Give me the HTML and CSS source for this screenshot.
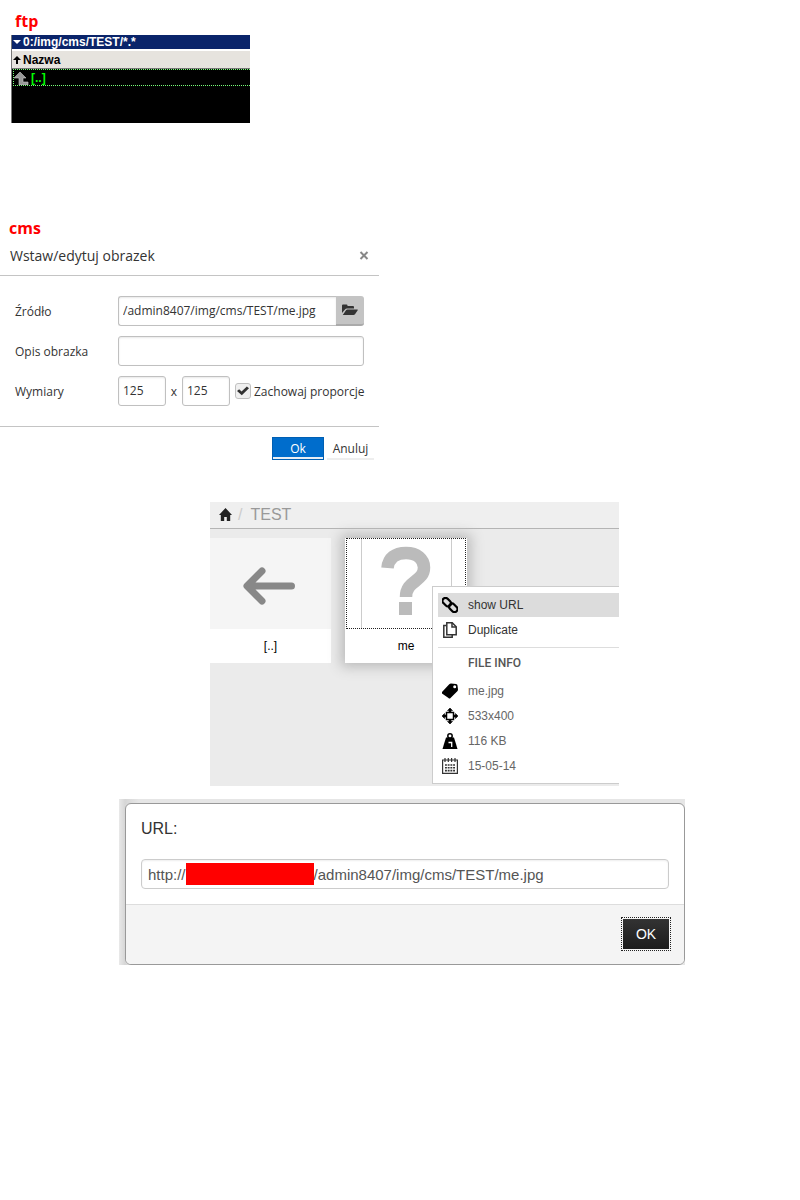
FILE: index.html
```
<!DOCTYPE html>
<html lang="pl">
<head>
<meta charset="utf-8">
<meta name="viewport" content="width=device-width, initial-scale=1">
<title>ftp / cms</title>
<link rel="stylesheet" href="styles.css">
</head>
<body>
<main class="page">
  <section class="ftp">
    <h2 class="label">ftp</h2>
    <div class="ftp-panel">
      <div class="ftp-path"><svg width="8" height="8" viewBox="0 0 8 8"><path d="M0 2h8L4 6z" fill="#fff"/></svg>0:/img/cms/TEST/*.*</div>
      <div class="ftp-head"><svg width="8" height="10" viewBox="0 0 8 10"><path d="M4 1l4 4H5v4H3V5H0z"/></svg>Nazwa</div>
      <div class="ftp-row"><svg width="15" height="14" viewBox="0 0 15 14"><path d="M6 1l6 6H9v4h5v3H5V7H0z" fill="#999" stroke="#ccc" stroke-width=".6"/></svg>[..]</div>
    </div>
  </section>

  <section class="cms">
    <h2 class="label label-cms">cms</h2>
    <form class="insert">
      <header class="insert-head">
        <h3 class="insert-title">Wstaw/edytuj obrazek</h3>
        <button class="close" type="button" aria-label="Zamknij"><svg width="10" height="9" viewBox="0 0 10 9"><path d="M1.500 1l7 7M8.500 1l-7 7" stroke="#888" stroke-width="2"/></svg></button>
      </header>
      <div class="insert-body">
        <div class="row">
          <label class="row-label" for="src">Źródło</label>
          <div class="source">
            <input class="field source-field" id="src" type="text" value="/admin8407/img/cms/TEST/me.jpg">
            <button class="browse" type="button" aria-label="Przeglądaj"><svg width="16" height="12" viewBox="0 0 16 12"><path d="M0 9V1.500Q0 .5 1 .5h3.500q1 0 1 1V2H11q1 0 1 1v1.500H5Q3.700 4.500 3 5.600zM.8 11L4 6.200q.5-.7 1.400-.7h9.800q1 0 .5.8L13 10.200q-.6.8-1.500.8z" fill="#333"/></svg></button>
          </div>
        </div>
        <div class="row">
          <label class="row-label" for="desc">Opis obrazka</label>
          <input class="field" id="desc" type="text">
        </div>
        <div class="row">
          <label class="row-label" for="w">Wymiary</label>
          <div class="dims">
            <input class="field size" id="w" type="text" value="125">
            <span class="times">x</span>
            <input class="field size" type="text" value="125" aria-label="Wysokość">
            <label class="keep"><input class="tick" type="checkbox" checked>Zachowaj proporcje</label>
          </div>
        </div>
      </div>
      <footer class="insert-foot">
        <button class="ok" type="button">Ok</button>
        <button class="cancel" type="button">Anuluj</button>
      </footer>
    </form>
  </section>

  <section class="files">
    <nav class="crumbs">
      <a class="home" href="#" aria-label="Home"><svg width="13" height="13" viewBox="0 0 13 13"><path d="M6.500 0L13 7h-1.800v6H7.800V9H5.200v4H1.800V7H0L6.500 0z" fill="#222"/></svg></a>
      <span class="slash">/</span>
      <span>TEST</span>
    </nav>
    <div class="cards">
      <figure class="card">
        <div class="thumb thumb-back"><svg width="52" height="38" viewBox="0 0 52 38"><path d="M48.500 19H5M19 4L4 19l15 15" fill="none" stroke="#888" stroke-width="7" stroke-linecap="round" stroke-linejoin="round"/></svg></div>
        <figcaption class="caption">[..]</figcaption>
      </figure>
      <figure class="card card-active">
        <div class="thumb thumb-file"><div class="unknown"><svg width="50" height="70" viewBox="0 0 50 70"><path d="M6.500 22C7.500 12 14 7 25 7c11 0 18 6 18 14.500C43 36 25 34 25 51" fill="none" stroke="#bbb" stroke-width="12.500"/><path d="M18 56h13v13H18z" fill="#bbb"/></svg></div></div>
        <figcaption class="caption">me</figcaption>
      </figure>
    </div>
    <div class="menu">
      <button class="item item-on" type="button"><svg width="16" height="16" viewBox="0 0 16 16"><g fill="none" stroke="#000" stroke-width="2.200"><rect x="0" y="2.200" width="9.500" height="6" rx="3" transform="rotate(45 4.750 5.200)"/><rect x="6.500" y="7.800" width="9.500" height="6" rx="3" transform="rotate(45 11.250 10.800)"/></g></svg>show URL</button>
      <button class="item" type="button"><svg width="16" height="16" viewBox="0 0 16 16"><g fill="#fff" stroke="#333" stroke-width="1.500"><path d="M4 3.500H1.800v11.700h8.400V13"/><path d="M4.800.8h5.400l4 4v8H4.800z"/><path d="M10 .8v4.200h4.200" fill="none"/></g></svg>Duplicate</button>
      <div class="info-title">FILE INFO</div>
      <div class="info"><svg width="16" height="16" viewBox="0 0 16 16"><path fill-rule="evenodd" d="M0 9L7 1.500Q8 .5 9 .5l5 .5q1.500.2 1.500 1.500l.5 4q0 1-.7 1.700L8.500 15q-1 1-2 0L0 10.500q-.6-.8 0-1.500zM12.700 2.200a1.500 1.500 0 100 3 1.500 1.500 0 000-3z"/></svg>me.jpg</div>
      <div class="info"><svg width="16" height="16" viewBox="0 0 16 16"><rect x="4.500" y="4.500" width="7" height="7" fill="none" stroke="#000" stroke-width="1.500"/><path d="M8 0l2.500 2.500H9V4H7V2.500H5.500zM8 16l2.500-2.500H9V12H7v1.500H5.500zM0 8l2.500-2.500V7H4v2H2.500v1.500zM16 8l-2.500-2.500V7H12v2h1.500v1.500z" stroke="#000" stroke-width=".6"/></svg>533x400</div>
      <div class="info"><svg width="16" height="16" viewBox="0 0 16 16"><circle cx="8" cy="3" r="2.200" fill="none" stroke="#000" stroke-width="1.500"/><path d="M4 4.500h8L15.500 16H.5z"/><path d="M6.500 9.500h3.200V14" fill="none" stroke="#fff" stroke-width="1.300"/></svg>116 KB</div>
      <div class="info"><svg width="16" height="16" viewBox="0 0 16 16"><path d="M.6 2h14.800v13.400H.6zM3 0v4M6.300 0v4M9.600 0v4M13 0v4" fill="none" stroke="#333" stroke-width="1.200"/><path d="M3 7h10M3 9.800h10M3 12.600h10" stroke="#333" stroke-width="1.600" stroke-dasharray="1.900 .8"/></svg>15-05-14</div>
    </div>
  </section>

  <section class="backdrop">
    <form class="dialog">
      <div class="dialog-body">
        <label class="dialog-title" for="url">URL:</label>
        <div class="url-box">
          <span>http://</span><span class="redacted"></span><input class="url" id="url" type="text" value="/admin8407/img/cms/TEST/me.jpg">
        </div>
      </div>
      <footer class="dialog-foot">
        <button class="dialog-ok" type="button">OK</button>
      </footer>
    </form>
  </section>
</main>
</body>
</html>
```
FILE: styles.css
```
* { box-sizing: border-box; }
body {
  margin: 0;
  background: #fff;
  color: #333;
  font-family: "Open Sans", sans-serif;
  font-size: 12px;
}
h2, h3, figure { margin: 0; }
button, input { font: inherit; color: inherit; margin: 0; }
button { padding: 0; border: 0; background: none; }
svg { flex: none; display: block; }
.page { padding-top: 12px; }

.label {
  color: #f00;
  font-size: 16px;
  line-height: 18px;
  font-weight: 700;
  padding-left: 15px;
}
.label-cms { padding-left: 9px; }

.ftp-panel {
  max-width: 239px;
  height: 88px;
  margin: 5px 0 0 11px;
  border-left: 1px solid #777;
  background: #000;
  color: #000;
  font: 700 12px "Liberation Sans", Arial, sans-serif;
}
.ftp-path, .ftp-head, .ftp-row { display: flex; align-items: center; gap: 2px; }
.ftp-path { height: 14px; padding-left: 1px; background: #0a246a; color: #fff; }
.ftp-head {
  height: 20px;
  padding: 1px 0 0 1px;
  border-top: 2px solid #fff;
  border-bottom: 1px solid #777;
  background: #e6e3de;
}
.ftp-row { height: 17px; margin-left: 1px; border: 1px dotted #7f7; border-right: 0; color: #0f0; }

.cms { margin-top: 96px; }
.insert { max-width: 379px; }
.insert-head {
  display: flex;
  align-items: center;
  justify-content: space-between;
  height: 39px;
  padding: 0 9px 1px 10px;
  border-bottom: 1px solid #c4c4c4;
}
.insert-title { font-size: 14px; font-weight: 400; }
.close { padding: 1px; }
.insert-body { display: grid; gap: 10px; padding: 20px 15px; border-bottom: 1px solid #c4c4c4; }
.row { display: grid; grid-template-columns: 103px 1fr; align-items: center; }
.field {
  width: 100%;
  height: 30px;
  padding: 0 4px 2px;
  border: 1px solid #c0c0c0;
  border-radius: 3px;
  background: #fff;
  box-shadow: inset 0 1px 2px #e8e8e8;
}
.source, .dims { display: flex; align-items: center; }
.source-field { flex: 1; min-width: 0; border-right: 0; border-radius: 3px 0 0 3px; }
.browse {
  display: grid;
  place-items: center;
  width: 28px;
  height: 30px;
  background: #c4c4c4;
  border-bottom: 2px solid #aaa;
  border-radius: 0 3px 3px 0;
}
.size { flex: none; width: 48px; }
.times { width: 16px; text-align: center; }
.keep { display: flex; align-items: center; gap: 3px; margin-left: 5px; white-space: nowrap; }
.tick {
  appearance: none;
  display: grid;
  place-items: center;
  width: 16px;
  height: 16px;
  border: 1px solid #c0c0c0;
  border-radius: 3px;
  background: #f0f0f0;
}
.tick:checked::before {
  content: "";
  width: 12px;
  height: 10px;
  background: #333;
  clip-path: polygon(0 50%, 18% 32%, 38% 55%, 82% 5%, 100% 22%, 40% 92%);
}
.insert-foot { display: flex; justify-content: flex-end; gap: 3px; padding: 10px 5px 0; }
.ok { width: 52px; height: 23px; border: 1px solid #005fb3; background: #006dcc; color: #fff; box-shadow: inset 0 -2px #e8eef5; }
.cancel { width: 47px; height: 23px; padding-top: 2px; border-bottom: 2px solid #eee; }

.files {
  position: relative;
  max-width: 409px;
  height: 284px;
  margin: 42px 0 0 210px;
  overflow: hidden;
  background: #ebebeb;
  font-family: "Liberation Sans", Arial, sans-serif;
}
.crumbs {
  display: flex;
  align-items: center;
  height: 27px;
  padding: 0 9px 1px;
  border-bottom: 1px solid #b4b4b4;
  background: #efefef;
  color: #999;
  font-size: 16px;
}
.slash { margin: 0 8px 0 6px; color: #ccc; }
.cards { display: flex; gap: 14px; padding-top: 9px; }
.card { width: 121px; background: #fff; }
.card-active { width: 122px; box-shadow: 0 0 12px 4px #bbb; }
.thumb { display: flex; align-items: center; justify-content: center; height: 91px; }
.thumb-back { background: #f5f5f5; padding: 5px 4px 0 0; }
.thumb-file { align-items: stretch; margin: 0 1px; border: 1px dotted #222; }
.unknown { display: flex; justify-content: center; width: 91px; padding-top: 7px; border: solid #ccc; border-width: 0 1px; }
.caption { height: 34px; line-height: 34px; text-align: center; color: #000; }
.menu {
  position: absolute;
  top: 84px;
  left: 222px;
  right: 0;
  padding: 6px 0 5px 5px;
  border: 1px solid #ccc;
  border-right: 0;
  background: #fff;
}
.item, .info { display: flex; align-items: center; gap: 10px; width: 100%; padding-left: 4px; }
.item { height: 25px; text-align: left; }
.item-on { height: 24px; background: #dcdcdc; }
.info-title { margin-top: 5px; padding-left: 30px; border-top: 1px solid #ddd; color: #555; font: 500 12px/30px Roboto, sans-serif; }
.info { height: 25px; color: #666; }

.backdrop { max-width: 566px; margin: 13px 0 0 119px; padding: 4px 0 0 6px; background: linear-gradient(90deg, #e9e9e9, #d6d6d6 6px, #e6e6e6 20px); font-family: "Liberation Sans", Arial, sans-serif; }
.dialog { border: 1px solid #999; border-radius: 6px; background: #fff; overflow: hidden; }
.dialog-body { padding: 15px; }
.dialog-title { display: block; font-size: 16px; line-height: 20px; }
.url-box {
  display: flex;
  align-items: center;
  height: 30px;
  margin-top: 20px;
  padding: 0 6px;
  border: 1px solid #ccc;
  border-radius: 4px;
  color: #555;
  font-size: 15px;
  box-shadow: inset 0 1px 2px #eee;
}
.redacted { flex: none; width: 128px; height: 22px; background: #f00; }
.url { flex: 1; min-width: 0; padding: 0; border: 0; background: none; }
.dialog-foot { display: flex; justify-content: flex-end; padding: 12px 13px 13px; border-top: 1px solid #ddd; background: #f4f4f4; }
.dialog-ok {
  width: 50px;
  height: 34px;
  border: 1px dotted #222;
  padding: 1px;
  background: linear-gradient(#333, #1c1c1c) content-box;
  color: #fff;
  font-size: 14px;
}
```
